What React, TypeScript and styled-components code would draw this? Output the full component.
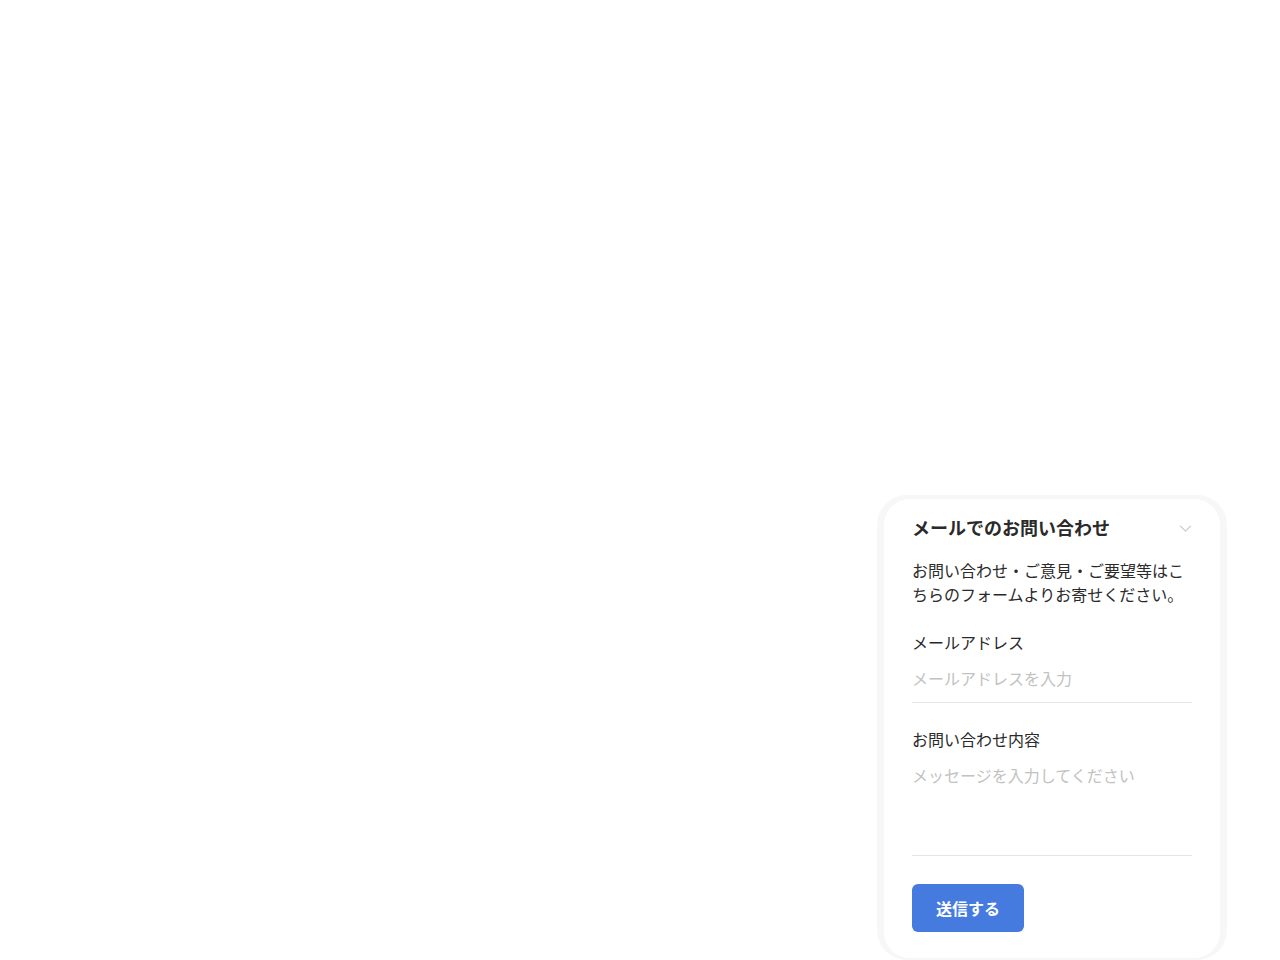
import styled, { createGlobalStyle } from "styled-components";

const GlobalStyle = createGlobalStyle`
  html, body {
    margin: 0;
    padding: 0;
    background: #fff;
  }
  body {
    font-family: "Noto Sans CJK JP", "Noto Sans", sans-serif;
    color: #222;
  }
  * {
    box-sizing: border-box;
  }
`;

const App = () => {
  return (
    <>
      <GlobalStyle />
      <Page>
        <Frame>
          <Card>
            <Header>
              <Title>メールでのお問い合わせ</Title>
              <Chevron viewBox="0 0 14 8" aria-hidden>
                <path d="M1 1 L7 7 L13 1" />
              </Chevron>
            </Header>
            <Lead>
              お問い合わせ・ご意見・ご要望等はこちらのフォームよりお寄せください。
            </Lead>

            <Field>
              <Label htmlFor="mail">メールアドレス</Label>
              <Input id="mail" type="email" placeholder="メールアドレスを入力" />
            </Field>

            <Field>
              <Label htmlFor="msg">お問い合わせ内容</Label>
              <TextArea id="msg" placeholder="メッセージを入力してください" />
            </Field>

            <SubmitButton type="button">送信する</SubmitButton>
          </Card>
        </Frame>
      </Page>
    </>
  );
};

const Page = styled.div`
  height: 960px;
  display: flex;
  justify-content: flex-end;
  align-items: flex-end;
  padding-right: 53px;
  overflow: hidden;
`;

const Frame = styled.div`
  width: 350px;
  padding: 4px 7px 2px;
  background: #f7f7f7;
  border-radius: 30px;
`;

const Card = styled.div`
  background: #fff;
  border-radius: 26px;
  padding: 16px 28px 26px;
  display: flex;
  flex-direction: column;
  align-items: flex-start;
`;

const Header = styled.div`
  width: 100%;
  display: flex;
  justify-content: space-between;
  align-items: center;
`;

const Title = styled.h2`
  margin: 0;
  font-size: 18px;
  line-height: 24px;
  font-weight: 700;
  color: #2a2a2a;
`;

const Chevron = styled.svg`
  width: 13px;
  height: 7px;
  margin-top: 2px;
  fill: none;
  stroke: #c4c4c4;
  stroke-width: 1.2;
`;

const Lead = styled.p`
  margin: 19px 0 0;
  font-size: 16px;
  line-height: 24px;
  color: #2a2a2a;
`;

const Field = styled.div`
  width: 100%;
  margin-top: 24px;
  display: flex;
  flex-direction: column;
`;

const Label = styled.label`
  font-size: 16px;
  line-height: 24px;
  color: #2a2a2a;
`;

const Input = styled.input`
  width: 100%;
  border: none;
  border-bottom: 1px solid #e6e6e6;
  padding: 12px 0;
  font-family: inherit;
  font-size: 16px;
  line-height: 24px;
  height: 49px;
  color: #2a2a2a;
  outline: none;
  background: transparent;

  &::placeholder {
    color: #c2c2c2;
  }
`;

const TextArea = styled.textarea`
  width: 100%;
  height: 105px;
  border: none;
  border-bottom: 1px solid #e6e6e6;
  padding: 12px 0;
  font-family: inherit;
  font-size: 16px;
  line-height: 24px;
  color: #2a2a2a;
  resize: none;
  outline: none;
  background: transparent;
  display: block;

  &::placeholder {
    color: #c2c2c2;
  }
`;

const SubmitButton = styled.button`
  margin-top: 28px;
  width: 112px;
  height: 48px;
  border: none;
  border-radius: 6px;
  background: #457bdf;
  color: #fff;
  font-family: inherit;
  font-size: 16px;
  font-weight: 700;
  cursor: pointer;
`;

export default App;
